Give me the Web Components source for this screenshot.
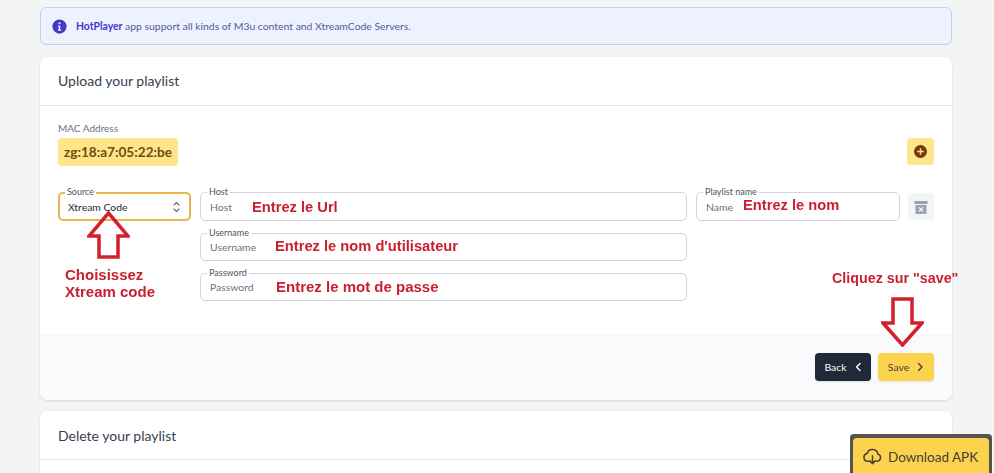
<!DOCTYPE html>
<html lang="en">
<head>
<meta charset="utf-8">
<title>Upload your playlist</title>
<style>
  html, body { height: 100%; overflow: hidden; }
  body {
    margin: 0;
    padding: 7px 42px 0 40px;
    box-sizing: border-box;
    background: #f3f4f6;
    font-family: Lato, "Open Sans", sans-serif;
    color: #374151;
  }
  .stack { display: flex; flex-direction: column; gap: 11px; position: relative; }
  .stack hp-alert { margin-bottom: 1px; }
  .nudge { margin-bottom: 2px; }
  .mac-row { display: flex; justify-content: space-between; align-items: flex-start; }
  .mac-row hp-icon-button { margin-top: 17px; }
  .fields { display: grid; grid-template-columns: 133px 487px 204px 26px; column-gap: 9px; row-gap: 12px; margin-top: 26px; height: 142px; align-content: start; }
  .fields hp-select { grid-row: 1; grid-column: 1; }
  .fields .col { grid-column: 2; display: flex; flex-direction: column; gap: 12px; }
  .fields hp-field.name { grid-column: 3; align-self: start; }
  .fields hp-icon-button { grid-column: 4; margin: 1px 0 0 -1px; width: 26px; }
</style>
</head>
<body>
<template id="card-tpl">
  <style>
    :host { display: block; background: #fff; border-radius: 8px; box-shadow: 0 1px 3px rgba(0,0,0,.12); overflow: hidden; }
    header { height: 48px; padding: 0 18px; display: flex; align-items: center; border-bottom: 1px solid #e5e7eb; font-size: 14px; color: #374151; }
    .body { padding: 15px 18px 0; }
    footer { display: flex; justify-content: flex-end; gap: 7px; background: #f8fafc; padding: 19px 18px; }
  </style>
  <header><slot name="title"></slot></header>
  <div class="body"><slot></slot></div>
  <footer><slot name="footer"></slot></footer>
</template>
<script>
  class HpAlert extends HTMLElement {
    connectedCallback() {
      this.attachShadow({ mode: 'open' });
      this.shadowRoot.innerHTML = `
        <style>
          :host { display: flex; align-items: center; gap: 9px; height: 38px; box-sizing: border-box; padding: 0 11px; background: #eef2ff; border: 1px solid #c7cdea; border-radius: 6px; color: #4f5a9e; font-size: 10.4px; }
          svg { width: 15px; height: 15px; flex: none; }
          ::slotted(b) { color: #4338ca; font-weight: 700; }
        </style>
        <svg viewBox="0 0 20 20"><path fill="#4338ca" fill-rule="evenodd" d="M10 .5a9.5 9.5 0 1 0 0 19 9.5 9.5 0 0 0 0-19zM10 4.2a1.5 1.5 0 1 1 0 3 1.5 1.5 0 0 1 0-3zM8 9h3v5h1.2v1.8H7.8V14H9v-3.2H8z"/></svg>
        <span><slot></slot></span>`;
    }
  }

  class HpCard extends HTMLElement {
    connectedCallback() {
      this.attachShadow({ mode: 'open' });
      this.shadowRoot.append(document.getElementById('card-tpl').content.cloneNode(true));
      if (this.hasAttribute('fill')) this.shadowRoot.querySelector('footer').style.display = 'none';
    }
  }

  class HpMac extends HTMLElement {
    connectedCallback() {
      this.attachShadow({ mode: 'open' });
      this.shadowRoot.innerHTML = `
        <style>
          :host { display: block; }
          label { display: block; font-size: 10px; color: #6b7280; line-height: 12px; margin-bottom: 4px; margin-top: 1px; }
          div { display: inline-flex; align-items: center; height: 28px; padding: 0 6px; background: #fde68a; border-radius: 4px; color: #78490f; font-size: 13.6px; font-weight: 700; }
        </style>
        <label>${this.getAttribute('label')}</label>
        <div><slot></slot></div>`;
    }
  }

  class HpField extends HTMLElement {
    connectedCallback() {
      this.attachShadow({ mode: 'open' });
      const h = this.getAttribute('height') || '28';
      this.shadowRoot.innerHTML = `
        <style>
          :host { display: block; position: relative; height: ${h}px; box-sizing: border-box; border: 1px solid #d1d5db; border-radius: 5px; background: #fff; }
          label { position: absolute; left: 6px; top: -6px; padding: 0 2px; background: #fff; font-size: 9px; line-height: 9px; color: #4b5563; }
          span { display: flex; align-items: center; height: 100%; padding-left: 9px; font-size: 10.4px; color: #6b7280; }
        </style>
        <label>${this.getAttribute('label')}</label>
        <span>${this.getAttribute('placeholder')}</span>`;
    }
  }

  class HpSelect extends HTMLElement {
    connectedCallback() {
      this.attachShadow({ mode: 'open' });
      this.shadowRoot.innerHTML = `
        <style>
          :host { display: block; position: relative; height: 29px; box-sizing: border-box; border: 2px solid #e9b44c; border-radius: 5px; background: #fff; }
          label { position: absolute; left: 5px; top: -7px; padding: 0 2px; background: #fff; font-size: 9px; line-height: 9px; color: #4b5563; }
          div { display: flex; align-items: center; justify-content: space-between; height: 100%; padding: 0 7px 0 8px; font-size: 10.4px; color: #1f2937; }
          svg { width: 11px; height: 14px; }
        </style>
        <label>${this.getAttribute('label')}</label>
        <div><slot></slot>
          <svg viewBox="0 0 11 14" fill="none" stroke="#6b7280" stroke-width="1.2" stroke-linecap="round" stroke-linejoin="round"><path d="M3 5l2.5-2.5L8 5M3 9l2.5 2.5L8 9"/></svg>
        </div>`;
    }
  }

  class HpIconButton extends HTMLElement {
    connectedCallback() {
      this.attachShadow({ mode: 'open' });
      const kind = this.getAttribute('kind');
      const icons = {
        add: `<svg viewBox="0 0 12 12" width="13" height="13"><circle cx="6" cy="6" r="6" fill="#78350f"/><path d="M6 3v6M3 6h6" stroke="#fde68a" stroke-width="1.3"/></svg>`,
        trash: `<svg viewBox="0 0 14 14" width="14" height="14"><path fill="#9ca3af" d="M.5 1h13v3H.5zM1.5 5h11v8a1 1 0 0 1-1 1h-9a1 1 0 0 1-1-1z"/><path d="M5 7.5l4 4M9 7.5l-4 4" stroke="#f3f4f6" stroke-width="1.2"/></svg>`
      };
      this.shadowRoot.innerHTML = `
        <style>
          :host { display: flex; align-items: center; justify-content: center; width: 27px; height: 27px; border-radius: 4px; background: ${kind === 'add' ? '#fde68a' : '#f3f4f6'}; }
        </style>
        ${icons[kind]}`;
    }
  }

  class HpButton extends HTMLElement {
    connectedCallback() {
      this.attachShadow({ mode: 'open' });
      const dark = this.getAttribute('kind') === 'dark';
      const d = dark ? 'M5 1.5L1.5 5 5 8.5' : 'M1.5 1.5L5 5 1.5 8.5';
      this.shadowRoot.innerHTML = `
        <style>
          :host { display: inline-flex; align-items: center; justify-content: center; gap: 8px; width: 56px; height: 28px; border-radius: 4px; font-size: 10.4px; background: ${dark ? '#1f2937' : '#fcd34d'}; color: ${dark ? '#fff' : '#44403c'}; box-shadow: 0 1px 2px rgba(0,0,0,.1); }
          svg { width: 7px; height: 10px; }
        </style>
        <slot></slot>
        <svg viewBox="0 0 7 10" fill="none" stroke="currentColor" stroke-width="1.4" stroke-linecap="round" stroke-linejoin="round"><path d="${d}"/></svg>`;
    }
  }

  // red notes drawn over the screenshot, so they sit on a free canvas
  class HpNote extends HTMLElement {
    connectedCallback() {
      this.attachShadow({ mode: 'open' });
      this.shadowRoot.innerHTML = `
        <style>
          :host { position: fixed; left: ${this.getAttribute('x')}px; top: ${this.getAttribute('y')}px; font: 700 ${this.getAttribute('size') || '14.7'}px/17px "Liberation Sans", Arial, sans-serif; color: #c9202f; }
          span { display: block; white-space: pre; }
        </style>
        <span><slot></slot></span>`;
    }
  }

  class HpArrow extends HTMLElement {
    connectedCallback() {
      this.attachShadow({ mode: 'open' });
      const up = this.getAttribute('dir') === 'up';
      const pts = up
        ? '21.5,2 41,25 31,25 31,46 12,46 12,25 2,25'
        : '12,2 31,2 31,26 41,26 21.5,48 2,26 12,26';
      this.shadowRoot.innerHTML = `
        <style>
          :host { position: fixed; left: ${this.getAttribute('x')}px; top: ${this.getAttribute('y')}px; line-height: 0; }
        </style>
        <svg width="43" height="50" viewBox="0 0 43 50"><polygon points="${pts}" fill="none" stroke="#d3202e" stroke-width="3.5"/></svg>`;
    }
  }

  class HpDownload extends HTMLElement {
    connectedCallback() {
      this.attachShadow({ mode: 'open' });
      this.shadowRoot.innerHTML = `
        <style>
          :host { position: fixed; right: 2px; bottom: 0; display: block; padding: 4px 3px 0; background: #57534e; border-radius: 4px 4px 0 0; }
          div { display: flex; align-items: center; gap: 6px; height: 35px; width: 136px; box-sizing: border-box; padding: 2px 0 0 10px; background: #fcd34d; border-radius: 4px 4px 0 0; color: #44403c; font-size: 13.5px; }
          svg { width: 19px; height: 19px; flex: none; }
        </style>
        <div>
          <svg viewBox="0 0 24 24" fill="none" stroke="#44403c" stroke-width="1.9" stroke-linecap="round" stroke-linejoin="round"><path d="M7 18H6a5 5 0 0 1-.8-9.9A7 7 0 0 1 18.8 9 4.6 4.6 0 0 1 18 18h-1"/><path d="M12 11v10M8.5 17.5L12 21l3.5-3.5"/></svg>
          <slot></slot>
        </div>`;
    }
  }

  customElements.define('hp-alert', HpAlert);
  customElements.define('hp-card', HpCard);
  customElements.define('hp-mac', HpMac);
  customElements.define('hp-field', HpField);
  customElements.define('hp-select', HpSelect);
  customElements.define('hp-icon-button', HpIconButton);
  customElements.define('hp-button', HpButton);
  customElements.define('hp-note', HpNote);
  customElements.define('hp-arrow', HpArrow);
  customElements.define('hp-download', HpDownload);
</script>

<div class="stack">
  <hp-alert><b>HotPlayer</b> app support all kinds of M3u content and XtreamCode Servers.</hp-alert>

  <hp-card>
    <span slot="title" class="nudge">Upload your playlist</span>
    <div class="mac-row">
      <hp-mac label="MAC Address">zg:18:a7:05:22:be</hp-mac>
      <hp-icon-button kind="add"></hp-icon-button>
    </div>
    <div class="fields">
      <hp-select label="Source">Xtream Code</hp-select>
      <div class="col">
        <hp-field label="Host" placeholder="Host" height="29"></hp-field>
        <hp-field label="Username" placeholder="Username"></hp-field>
        <hp-field label="Password" placeholder="Password"></hp-field>
      </div>
      <hp-field class="name" label="Playlist name" placeholder="Name" height="29"></hp-field>
      <hp-icon-button kind="trash"></hp-icon-button>
    </div>
    <hp-button slot="footer" kind="dark">Back</hp-button>
    <hp-button slot="footer">Save</hp-button>
  </hp-card>

  <hp-card fill style="height: 200px">
    <span slot="title">Delete your playlist</span>
  </hp-card>
</div>

<hp-note x="252" y="199">Entrez le Url</hp-note>
<hp-note x="275" y="238">Entrez le nom d'utilisateur</hp-note>
<hp-note x="276" y="278" size="15">Entrez le mot de passe</hp-note>
<hp-note x="743" y="197">Entrez le nom</hp-note>
<hp-note x="65" y="266" size="15">Choisissez
Xtream code</hp-note>
<hp-note x="832" y="270" size="14.3">Cliquez sur "save"</hp-note>
<hp-arrow dir="up" x="87" y="211"></hp-arrow>
<hp-arrow dir="down" x="881" y="297"></hp-arrow>

<hp-download>Download APK</hp-download>
</body>
</html>
